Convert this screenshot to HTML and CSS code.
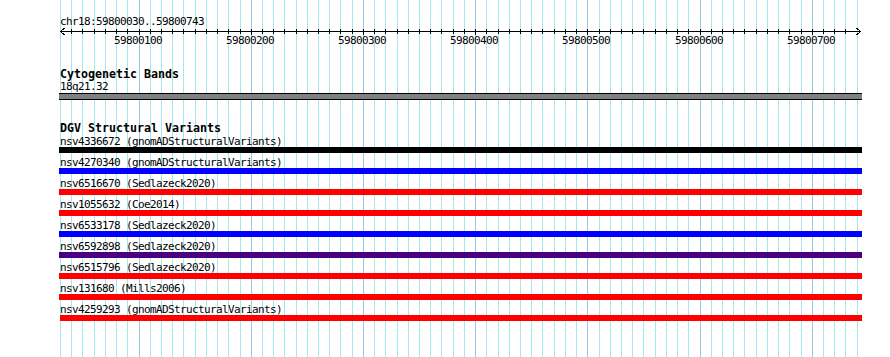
FILE: index.html
```html
<!DOCTYPE html>
<html lang="en">
<head>
  <meta charset="UTF-8" />
  <title>chr18:59800030..59800743</title>
  <link rel="stylesheet" href="styles.css">
</head>
<body>
  <div class="panel">
    <!-- grid lines, one every 10 bp -->
    <svg class="grid" width="802" height="357" viewBox="0 0 802 357">
      <g class="minor">
        <line x1="0.5" y1="0" x2="0.5" y2="357"/>
        <line x1="11.5" y1="0" x2="11.5" y2="357"/>
        <line x1="22.5" y1="0" x2="22.5" y2="357"/>
        <line x1="34.5" y1="0" x2="34.5" y2="357"/>
        <line x1="45.5" y1="0" x2="45.5" y2="357"/>
        <line x1="56.5" y1="0" x2="56.5" y2="357"/>
        <line x1="67.5" y1="0" x2="67.5" y2="357"/>
        <line x1="90.5" y1="0" x2="90.5" y2="357"/>
        <line x1="101.5" y1="0" x2="101.5" y2="357"/>
        <line x1="112.5" y1="0" x2="112.5" y2="357"/>
        <line x1="123.5" y1="0" x2="123.5" y2="357"/>
        <line x1="135.5" y1="0" x2="135.5" y2="357"/>
        <line x1="146.5" y1="0" x2="146.5" y2="357"/>
        <line x1="157.5" y1="0" x2="157.5" y2="357"/>
        <line x1="168.5" y1="0" x2="168.5" y2="357"/>
        <line x1="180.5" y1="0" x2="180.5" y2="357"/>
        <line x1="202.5" y1="0" x2="202.5" y2="357"/>
        <line x1="213.5" y1="0" x2="213.5" y2="357"/>
        <line x1="224.5" y1="0" x2="224.5" y2="357"/>
        <line x1="236.5" y1="0" x2="236.5" y2="357"/>
        <line x1="247.5" y1="0" x2="247.5" y2="357"/>
        <line x1="258.5" y1="0" x2="258.5" y2="357"/>
        <line x1="269.5" y1="0" x2="269.5" y2="357"/>
        <line x1="280.5" y1="0" x2="280.5" y2="357"/>
        <line x1="292.5" y1="0" x2="292.5" y2="357"/>
        <line x1="314.5" y1="0" x2="314.5" y2="357"/>
        <line x1="325.5" y1="0" x2="325.5" y2="357"/>
        <line x1="337.5" y1="0" x2="337.5" y2="357"/>
        <line x1="348.5" y1="0" x2="348.5" y2="357"/>
        <line x1="359.5" y1="0" x2="359.5" y2="357"/>
        <line x1="370.5" y1="0" x2="370.5" y2="357"/>
        <line x1="381.5" y1="0" x2="381.5" y2="357"/>
        <line x1="393.5" y1="0" x2="393.5" y2="357"/>
        <line x1="404.5" y1="0" x2="404.5" y2="357"/>
        <line x1="426.5" y1="0" x2="426.5" y2="357"/>
        <line x1="438.5" y1="0" x2="438.5" y2="357"/>
        <line x1="449.5" y1="0" x2="449.5" y2="357"/>
        <line x1="460.5" y1="0" x2="460.5" y2="357"/>
        <line x1="471.5" y1="0" x2="471.5" y2="357"/>
        <line x1="482.5" y1="0" x2="482.5" y2="357"/>
        <line x1="494.5" y1="0" x2="494.5" y2="357"/>
        <line x1="505.5" y1="0" x2="505.5" y2="357"/>
        <line x1="516.5" y1="0" x2="516.5" y2="357"/>
        <line x1="539.5" y1="0" x2="539.5" y2="357"/>
        <line x1="550.5" y1="0" x2="550.5" y2="357"/>
        <line x1="561.5" y1="0" x2="561.5" y2="357"/>
        <line x1="572.5" y1="0" x2="572.5" y2="357"/>
        <line x1="583.5" y1="0" x2="583.5" y2="357"/>
        <line x1="595.5" y1="0" x2="595.5" y2="357"/>
        <line x1="606.5" y1="0" x2="606.5" y2="357"/>
        <line x1="617.5" y1="0" x2="617.5" y2="357"/>
        <line x1="628.5" y1="0" x2="628.5" y2="357"/>
        <line x1="651.5" y1="0" x2="651.5" y2="357"/>
        <line x1="662.5" y1="0" x2="662.5" y2="357"/>
        <line x1="673.5" y1="0" x2="673.5" y2="357"/>
        <line x1="684.5" y1="0" x2="684.5" y2="357"/>
        <line x1="696.5" y1="0" x2="696.5" y2="357"/>
        <line x1="707.5" y1="0" x2="707.5" y2="357"/>
        <line x1="718.5" y1="0" x2="718.5" y2="357"/>
        <line x1="729.5" y1="0" x2="729.5" y2="357"/>
        <line x1="741.5" y1="0" x2="741.5" y2="357"/>
        <line x1="763.5" y1="0" x2="763.5" y2="357"/>
        <line x1="774.5" y1="0" x2="774.5" y2="357"/>
        <line x1="785.5" y1="0" x2="785.5" y2="357"/>
        <line x1="797.5" y1="0" x2="797.5" y2="357"/>
      </g>
      <g class="major">
        <line x1="79.5" y1="0" x2="79.5" y2="357"/>
        <line x1="191.5" y1="0" x2="191.5" y2="357"/>
        <line x1="303.5" y1="0" x2="303.5" y2="357"/>
        <line x1="415.5" y1="0" x2="415.5" y2="357"/>
        <line x1="527.5" y1="0" x2="527.5" y2="357"/>
        <line x1="640.5" y1="0" x2="640.5" y2="357"/>
        <line x1="752.5" y1="0" x2="752.5" y2="357"/>
      </g>
    </svg>

    <div class="tracks">
      <div class="chrom">chr18:59800030..59800743</div>

      <svg class="ruler" width="802" height="23" viewBox="0 0 802 23">
        <g class="axis">
          <line x1="0" y1="4.5" x2="800" y2="4.5"/>
          <polyline points="4.5,1 0.5,4.5 4.5,8"/>
          <polyline points="796.5,1 800.5,4.5 796.5,8"/>
        </g>
        <g class="ticks">
          <line x1="11.5" y1="2" x2="11.5" y2="7"/>
          <line x1="22.5" y1="2" x2="22.5" y2="7"/>
          <line x1="34.5" y1="2" x2="34.5" y2="7"/>
          <line x1="45.5" y1="2" x2="45.5" y2="7"/>
          <line x1="56.5" y1="2" x2="56.5" y2="7"/>
          <line x1="67.5" y1="2" x2="67.5" y2="7"/>
          <line x1="79.5" y1="2" x2="79.5" y2="8"/>
          <line x1="90.5" y1="2" x2="90.5" y2="7"/>
          <line x1="101.5" y1="2" x2="101.5" y2="7"/>
          <line x1="112.5" y1="2" x2="112.5" y2="7"/>
          <line x1="123.5" y1="2" x2="123.5" y2="7"/>
          <line x1="135.5" y1="2" x2="135.5" y2="7"/>
          <line x1="146.5" y1="2" x2="146.5" y2="7"/>
          <line x1="157.5" y1="2" x2="157.5" y2="7"/>
          <line x1="168.5" y1="2" x2="168.5" y2="7"/>
          <line x1="180.5" y1="2" x2="180.5" y2="7"/>
          <line x1="191.5" y1="2" x2="191.5" y2="8"/>
          <line x1="202.5" y1="2" x2="202.5" y2="7"/>
          <line x1="213.5" y1="2" x2="213.5" y2="7"/>
          <line x1="224.5" y1="2" x2="224.5" y2="7"/>
          <line x1="236.5" y1="2" x2="236.5" y2="7"/>
          <line x1="247.5" y1="2" x2="247.5" y2="7"/>
          <line x1="258.5" y1="2" x2="258.5" y2="7"/>
          <line x1="269.5" y1="2" x2="269.5" y2="7"/>
          <line x1="280.5" y1="2" x2="280.5" y2="7"/>
          <line x1="292.5" y1="2" x2="292.5" y2="7"/>
          <line x1="303.5" y1="2" x2="303.5" y2="8"/>
          <line x1="314.5" y1="2" x2="314.5" y2="7"/>
          <line x1="325.5" y1="2" x2="325.5" y2="7"/>
          <line x1="337.5" y1="2" x2="337.5" y2="7"/>
          <line x1="348.5" y1="2" x2="348.5" y2="7"/>
          <line x1="359.5" y1="2" x2="359.5" y2="7"/>
          <line x1="370.5" y1="2" x2="370.5" y2="7"/>
          <line x1="381.5" y1="2" x2="381.5" y2="7"/>
          <line x1="393.5" y1="2" x2="393.5" y2="7"/>
          <line x1="404.5" y1="2" x2="404.5" y2="7"/>
          <line x1="415.5" y1="2" x2="415.5" y2="8"/>
          <line x1="426.5" y1="2" x2="426.5" y2="7"/>
          <line x1="438.5" y1="2" x2="438.5" y2="7"/>
          <line x1="449.5" y1="2" x2="449.5" y2="7"/>
          <line x1="460.5" y1="2" x2="460.5" y2="7"/>
          <line x1="471.5" y1="2" x2="471.5" y2="7"/>
          <line x1="482.5" y1="2" x2="482.5" y2="7"/>
          <line x1="494.5" y1="2" x2="494.5" y2="7"/>
          <line x1="505.5" y1="2" x2="505.5" y2="7"/>
          <line x1="516.5" y1="2" x2="516.5" y2="7"/>
          <line x1="527.5" y1="2" x2="527.5" y2="8"/>
          <line x1="539.5" y1="2" x2="539.5" y2="7"/>
          <line x1="550.5" y1="2" x2="550.5" y2="7"/>
          <line x1="561.5" y1="2" x2="561.5" y2="7"/>
          <line x1="572.5" y1="2" x2="572.5" y2="7"/>
          <line x1="583.5" y1="2" x2="583.5" y2="7"/>
          <line x1="595.5" y1="2" x2="595.5" y2="7"/>
          <line x1="606.5" y1="2" x2="606.5" y2="7"/>
          <line x1="617.5" y1="2" x2="617.5" y2="7"/>
          <line x1="628.5" y1="2" x2="628.5" y2="7"/>
          <line x1="640.5" y1="2" x2="640.5" y2="8"/>
          <line x1="651.5" y1="2" x2="651.5" y2="7"/>
          <line x1="662.5" y1="2" x2="662.5" y2="7"/>
          <line x1="673.5" y1="2" x2="673.5" y2="7"/>
          <line x1="684.5" y1="2" x2="684.5" y2="7"/>
          <line x1="696.5" y1="2" x2="696.5" y2="7"/>
          <line x1="707.5" y1="2" x2="707.5" y2="7"/>
          <line x1="718.5" y1="2" x2="718.5" y2="7"/>
          <line x1="729.5" y1="2" x2="729.5" y2="7"/>
          <line x1="741.5" y1="2" x2="741.5" y2="7"/>
          <line x1="752.5" y1="2" x2="752.5" y2="8"/>
          <line x1="763.5" y1="2" x2="763.5" y2="7"/>
          <line x1="774.5" y1="2" x2="774.5" y2="7"/>
          <line x1="785.5" y1="2" x2="785.5" y2="7"/>
        </g>
        <g class="tick-labels">
          <text x="78" y="17">59800100</text>
          <text x="190" y="17">59800200</text>
          <text x="302" y="17">59800300</text>
          <text x="414" y="17">59800400</text>
          <text x="526" y="17">59800500</text>
          <text x="639" y="17">59800600</text>
          <text x="751" y="17">59800700</text>
        </g>
      </svg>

      <div class="track band-track">
        <div class="track-title">Cytogenetic Bands</div>
        <div class="feat-label">18q21.32</div>
        <div class="band"></div>
      </div>

      <div class="track dgv-track">
        <div class="track-title">DGV Structural Variants</div>
        <div class="feat">
          <div class="feat-label">nsv4336672 (gnomADStructuralVariants)</div>
          <div class="bar black"></div>
        </div>
        <div class="feat">
          <div class="feat-label">nsv4270340 (gnomADStructuralVariants)</div>
          <div class="bar blue"></div>
        </div>
        <div class="feat">
          <div class="feat-label">nsv6516670 (Sedlazeck2020)</div>
          <div class="bar red"></div>
        </div>
        <div class="feat">
          <div class="feat-label">nsv1055632 (Coe2014)</div>
          <div class="bar red"></div>
        </div>
        <div class="feat">
          <div class="feat-label">nsv6533178 (Sedlazeck2020)</div>
          <div class="bar blue"></div>
        </div>
        <div class="feat">
          <div class="feat-label">nsv6592898 (Sedlazeck2020)</div>
          <div class="bar purple"></div>
        </div>
        <div class="feat">
          <div class="feat-label">nsv6515796 (Sedlazeck2020)</div>
          <div class="bar red"></div>
        </div>
        <div class="feat">
          <div class="feat-label">nsv131680 (Mills2006)</div>
          <div class="bar red"></div>
        </div>
        <div class="feat">
          <div class="feat-label">nsv4259293 (gnomADStructuralVariants)</div>
          <div class="bar red inset"></div>
        </div>
      </div>
    </div>
  </div>
</body>
</html>
```

FILE: styles.css
```css
body {
  margin: 0;
  background: #ffffff;
  color: #000000;
  font-family: "DejaVu Sans Mono", monospace;
  font-size: 11px;
  letter-spacing: -0.62px;
}
.panel {
  display: grid;
  margin-left: 60px;
  width: 802px;
  height: 357px;
  overflow: visible;
}
.grid {
  grid-area: 1 / 1;
  display: block;
}
.grid line {
  stroke-width: 1;
  shape-rendering: crispEdges;
}
.grid .minor {
  stroke: #a4e8ee;
}
.grid .major {
  stroke: #98c8e6;
}
.tracks {
  grid-area: 1 / 1;
  display: flex;
  flex-direction: column;
}
.chrom {
  margin-top: 16px;
  line-height: 11px;
  height: 11px;
  white-space: nowrap;
}
.ruler {
  display: block;
  overflow: visible;
}
.ruler .axis line,
.ruler .axis polyline,
.ruler .ticks line {
  stroke: #000000;
  stroke-width: 1;
  fill: none;
  shape-rendering: crispEdges;
}
.ruler .tick-labels text {
  font-family: "DejaVu Sans Mono", monospace;
  font-size: 11px;
  letter-spacing: -0.62px;
  text-anchor: middle;
  fill: #000000;
}
.track {
  display: flex;
  flex-direction: column;
}
.track-title {
  font-size: 11.63px;
  font-weight: bold;
  letter-spacing: 0;
  line-height: 13px;
  height: 13px;
  white-space: nowrap;
}
.feat-label {
  line-height: 11px;
  height: 11px;
  white-space: nowrap;
}
.band-track {
  margin-top: 18px;
}
.band {
  margin: 1px 0 0 -1px;
  width: 803px;
  height: 5px;
  background: #808080;
  border-top: 1px solid #000000;
  border-bottom: 1px solid #000000;
}
.dgv-track {
  margin-top: 22px;
}
.dgv-track .track-title {
  margin-bottom: 1px;
}
.feat {
  display: flex;
  flex-direction: column;
  margin-bottom: 4px;
}
.bar {
  margin-left: -1px;
  width: 803px;
  height: 6px;
}
.bar.inset {
  margin-left: 0;
  width: 802px;
}
.black { background: #000000; }
.blue { background: #0000ff; }
.red { background: #ff0000; }
.purple { background: #4b0082; }
```
